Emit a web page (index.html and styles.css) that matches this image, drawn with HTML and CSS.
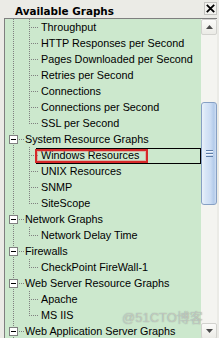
FILE: index.html
```html
<!DOCTYPE html>
<html>
<head>
<meta charset="utf-8">
<link rel="stylesheet" href="styles.css">
</head>
<body>
<div class="window">
  <div class="header">
    <span class="title">Available Graphs</span>
    <span class="close"><svg width="11" height="11" viewBox="0 0 11 11"><path d="M1.8 1.8 L9.2 9.2 M9.2 1.8 L1.8 9.2" stroke="#000" stroke-width="1.8" fill="none"/></svg></span>
  </div>
  <div class="panel">
    <div class="tree">
      <div class="row"><span class="cell pipe"></span><span class="cell tee"></span><span class="label">Throughput</span></div>
      <div class="row"><span class="cell pipe"></span><span class="cell tee"></span><span class="label">HTTP Responses per Second</span></div>
      <div class="row"><span class="cell pipe"></span><span class="cell tee"></span><span class="label">Pages Downloaded per Second</span></div>
      <div class="row"><span class="cell pipe"></span><span class="cell tee"></span><span class="label">Retries per Second</span></div>
      <div class="row"><span class="cell pipe"></span><span class="cell tee"></span><span class="label">Connections</span></div>
      <div class="row"><span class="cell pipe"></span><span class="cell tee"></span><span class="label">Connections per Second</span></div>
      <div class="row"><span class="cell pipe"></span><span class="cell end"></span><span class="label">SSL per Second</span></div>
      <div class="row"><span class="cell exp"><span class="box"></span></span><span class="label top">System Resource Graphs</span></div>
      <div class="row sel"><span class="cell pipe"></span><span class="cell tee"></span><span class="label"><span class="mark">Windows Resources</span></span></div>
      <div class="row"><span class="cell pipe"></span><span class="cell tee"></span><span class="label">UNIX Resources</span></div>
      <div class="row"><span class="cell pipe"></span><span class="cell tee"></span><span class="label">SNMP</span></div>
      <div class="row"><span class="cell pipe"></span><span class="cell end"></span><span class="label">SiteScope</span></div>
      <div class="row"><span class="cell exp"><span class="box"></span></span><span class="label top">Network Graphs</span></div>
      <div class="row"><span class="cell pipe"></span><span class="cell end"></span><span class="label">Network Delay Time</span></div>
      <div class="row"><span class="cell exp"><span class="box"></span></span><span class="label top">Firewalls</span></div>
      <div class="row"><span class="cell pipe"></span><span class="cell end"></span><span class="label">CheckPoint FireWall-1</span></div>
      <div class="row"><span class="cell exp"><span class="box"></span></span><span class="label top">Web Server Resource Graphs</span></div>
      <div class="row"><span class="cell pipe"></span><span class="cell tee"></span><span class="label">Apache</span></div>
      <div class="row"><span class="cell pipe"></span><span class="cell end"></span><span class="label">MS IIS</span></div>
      <div class="row"><span class="cell exp"><span class="box"></span></span><span class="label top">Web Application Server Graphs</span></div>
    </div>
    <div class="scrollbar">
      <div class="btn"><svg width="7" height="4" viewBox="0 0 7 4"><polygon points="0,4 7,4 3.5,0" fill="#4a4a4a"/></svg></div>
      <div class="track"><div class="thumb"><span class="grip"></span></div></div>
      <div class="btn"><svg width="7" height="4" viewBox="0 0 7 4"><polygon points="0,0 7,0 3.5,4" fill="#4a4a4a"/></svg></div>
    </div>
  </div>
  <div class="watermark">@51CTO博客</div>
</div>
</body>
</html>
```
FILE: styles.css
```css
html, body {
  margin: 0;
  padding: 0;
}
body {
  width: 219px;
  height: 338px;
  overflow: hidden;
  background: #ebebe6;
}
.window {
  position: relative;
  width: 219px;
  height: 338px;
  overflow: hidden;
}
.header {
  height: 18px;
  display: flex;
  align-items: flex-start;
}
.title {
  font-family: "DejaVu Sans", sans-serif;
  font-weight: bold;
  font-size: 10.4px;
  line-height: 16px;
  margin-top: 3px;
  padding-left: 15px;
  color: #000;
  white-space: nowrap;
}
.close {
  margin-left: auto;
  margin-top: 2px;
  margin-right: 2px;
  width: 11px;
  height: 11px;
  border: 1px solid #c4c4c0;
  display: flex;
  align-items: center;
  justify-content: center;
  background: #f2f2ee;
}
.panel {
  display: flex;
  margin-left: 4px;
  margin-right: 2px;
  border-left: 1px solid #7f7f7f;
  border-top: 1px solid #7f7f7f;
  height: 320px;
}
.tree {
  width: 196px;
  background: #cce8cd;
  overflow: hidden;
  font-family: "Liberation Sans", Arial, sans-serif;
  font-size: 10.8px;
  color: #000;
}
.row {
  position: relative;
  display: flex;
  height: 16px;
  line-height: 16px;
  white-space: nowrap;
}
.cell {
  position: relative;
  flex: none;
  width: 16px;
  height: 16px;
}
.cell::before,
.cell::after {
  content: "";
  position: absolute;
}
.pipe::before,
.tee::before,
.exp::before {
  left: 8px;
  top: 0;
  width: 1px;
  height: 16px;
  background: repeating-linear-gradient(to bottom, #808080 0 1px, transparent 1px 2px);
}
.end::before {
  left: 8px;
  top: 0;
  width: 1px;
  height: 9px;
  background: repeating-linear-gradient(to bottom, #808080 0 1px, transparent 1px 2px);
}
.tee::after,
.end::after {
  left: 9px;
  top: 8px;
  width: 8px;
  height: 1px;
  background: repeating-linear-gradient(to right, transparent 0 1px, #808080 1px 2px);
}
.exp::after {
  left: 13px;
  top: 8px;
  width: 6px;
  height: 1px;
  background: repeating-linear-gradient(to right, transparent 0 1px, #808080 1px 2px);
}
.box {
  position: absolute;
  left: 4px;
  top: 4px;
  width: 7px;
  height: 7px;
  border: 1px solid #808080;
  background: #fff;
  z-index: 1;
}
.box::after {
  content: "";
  position: absolute;
  left: 1px;
  top: 3px;
  width: 5px;
  height: 1px;
  background: #000;
}
.label {
  margin-left: 4px;
}
.sel::before {
  content: "";
  position: absolute;
  left: 31px;
  right: 0;
  top: 1px;
  bottom: -1px;
  border: 1px solid #000;
}
.mark {
  position: relative;
}
.mark::after {
  content: "";
  position: absolute;
  left: -6px;
  right: -9px;
  top: 0;
  bottom: -2px;
  border: 2px solid #d62a2a;
  box-shadow: inset 0 0 0 1px rgba(230, 120, 120, 0.45);
}
.scrollbar {
  width: 16px;
  display: flex;
  flex-direction: column;
  background: #f4f4f0;
}
.btn {
  flex: none;
  height: 16px;
  box-sizing: border-box;
  border: 1px solid #d2d2ce;
  border-radius: 2px;
  background: linear-gradient(to bottom, #fbfbf9, #ebebe6);
  display: flex;
  align-items: center;
  justify-content: center;
}
.track {
  flex: 1;
  display: flex;
  flex-direction: column;
}
.thumb {
  margin-top: 67px;
  height: 103px;
  box-sizing: border-box;
  border: 1px solid #86a0c4;
  border-radius: 3px;
  background: linear-gradient(to right, #eaf1fa 0, #d8e6f7 25%, #cbdcf3 60%, #b3cbea 85%, #d0def2 100%);
  display: flex;
  align-items: center;
  justify-content: center;
}
.grip {
  width: 7px;
  height: 7px;
  background: repeating-linear-gradient(to bottom, #5f7ea8 0 1px, #eef4fc 1px 2px, transparent 2px 3px);
}
.watermark {
  position: absolute;
  left: 122px;
  top: 309px;
  font-family: "Liberation Sans", "Noto Sans CJK SC", sans-serif;
  font-size: 13px;
  line-height: 18px;
  color: rgba(225, 232, 225, 0.55);
  text-shadow: 0 0 1px rgba(110, 110, 110, 0.7);
  white-space: nowrap;
}
```
